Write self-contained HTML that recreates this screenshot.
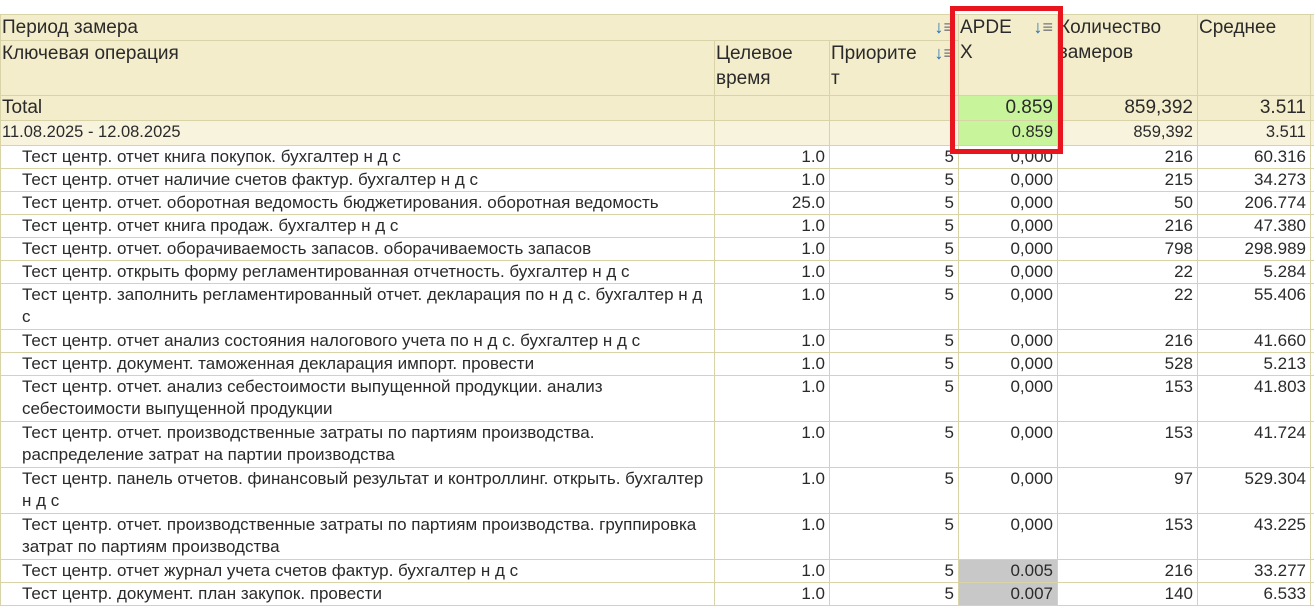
<!DOCTYPE html><html><head><meta charset="utf-8"><style>
body{margin:0;width:1314px;height:603px;overflow:hidden;background:#fff;font-family:"Liberation Sans",sans-serif;color:#2a2a2a;font-size:17px}
table{position:absolute;left:0;top:14px;border-collapse:collapse;table-layout:fixed;width:1318px}
td{border:1px solid #d9d3a8;padding:0 4px;vertical-align:top;line-height:22px;overflow:hidden;white-space:nowrap}
td.w{white-space:normal}
.h td{background:#f3edcb;font-size:19px;padding-left:1px;line-height:25px}
.t td{background:#f3edcb;font-size:19px;line-height:24px}
.t td:first-child,.d td:first-child{padding-left:1px}
.d td{background:#f8f3dd;font-size:16.5px}
.r{text-align:right}
.n td:first-child{padding-left:21px}
.g{background:#c8f59c!important}
.gr{background:#c8c8c8}
.ic{color:#1f6fb5;font-size:18px;float:right}
#box{position:absolute;left:950px;top:6px;width:103px;height:138px;border:5px solid #e8141e}
</style></head><body>
<table>
<colgroup><col style="width:714px"><col style="width:115px"><col style="width:129px"><col style="width:99px"><col style="width:140px"><col style="width:113px"><col style="width:8px"></colgroup>
<tr class="h" style="height:26px"><td colspan="3">Период замера<span class="ic">↓<span style="color:#777">≡</span></span></td><td rowspan="2" class="w">APDE <span class="ic">↓<span style="color:#777">≡</span></span><br>X</td><td rowspan="2" class="w">Количество замеров</td><td rowspan="2">Среднее</td><td rowspan="2"></td></tr>
<tr class="h" style="height:55px"><td>Ключевая операция</td><td class="w">Целевое время</td><td>Приорите <span class="ic">↓<span style="color:#777">≡</span></span><br>т</td></tr>
<tr class="t" style="height:25px"><td>Total</td><td></td><td></td><td class="r g">0.859</td><td class="r">859,392</td><td class="r">3.511</td><td></td></tr>
<tr class="d" style="height:25px"><td>11.08.2025 - 12.08.2025</td><td></td><td></td><td class="r g">0.859</td><td class="r">859,392</td><td class="r">3.511</td><td></td></tr>
<tr class="n" style="height:23px"><td>Тест центр. отчет книга покупок. бухгалтер н д с</td><td class="r">1.0</td><td class="r">5</td><td class="r">0,000</td><td class="r">216</td><td class="r">60.316</td><td></td></tr>
<tr class="n" style="height:23px"><td>Тест центр. отчет наличие счетов фактур. бухгалтер н д с</td><td class="r">1.0</td><td class="r">5</td><td class="r">0,000</td><td class="r">215</td><td class="r">34.273</td><td></td></tr>
<tr class="n" style="height:23px"><td>Тест центр. отчет. оборотная ведомость бюджетирования. оборотная ведомость</td><td class="r">25.0</td><td class="r">5</td><td class="r">0,000</td><td class="r">50</td><td class="r">206.774</td><td></td></tr>
<tr class="n" style="height:23px"><td>Тест центр. отчет книга продаж. бухгалтер н д с</td><td class="r">1.0</td><td class="r">5</td><td class="r">0,000</td><td class="r">216</td><td class="r">47.380</td><td></td></tr>
<tr class="n" style="height:23px"><td>Тест центр. отчет. оборачиваемость запасов. оборачиваемость запасов</td><td class="r">1.0</td><td class="r">5</td><td class="r">0,000</td><td class="r">798</td><td class="r">298.989</td><td></td></tr>
<tr class="n" style="height:23px"><td>Тест центр. открыть форму регламентированная отчетность. бухгалтер н д с</td><td class="r">1.0</td><td class="r">5</td><td class="r">0,000</td><td class="r">22</td><td class="r">5.284</td><td></td></tr>
<tr class="n" style="height:46px"><td>Тест центр. заполнить регламентированный отчет. декларация по н д с. бухгалтер н д<br>с</td><td class="r">1.0</td><td class="r">5</td><td class="r">0,000</td><td class="r">22</td><td class="r">55.406</td><td></td></tr>
<tr class="n" style="height:23px"><td>Тест центр. отчет анализ состояния налогового учета по н д с. бухгалтер н д с</td><td class="r">1.0</td><td class="r">5</td><td class="r">0,000</td><td class="r">216</td><td class="r">41.660</td><td></td></tr>
<tr class="n" style="height:23px"><td>Тест центр. документ. таможенная декларация импорт. провести</td><td class="r">1.0</td><td class="r">5</td><td class="r">0,000</td><td class="r">528</td><td class="r">5.213</td><td></td></tr>
<tr class="n" style="height:46px"><td>Тест центр. отчет. анализ себестоимости выпущенной продукции. анализ<br>себестоимости выпущенной продукции</td><td class="r">1.0</td><td class="r">5</td><td class="r">0,000</td><td class="r">153</td><td class="r">41.803</td><td></td></tr>
<tr class="n" style="height:46px"><td>Тест центр. отчет. производственные затраты по партиям производства.<br>распределение затрат на партии производства</td><td class="r">1.0</td><td class="r">5</td><td class="r">0,000</td><td class="r">153</td><td class="r">41.724</td><td></td></tr>
<tr class="n" style="height:46px"><td>Тест центр. панель отчетов. финансовый результат и контроллинг. открыть. бухгалтер<br>н д с</td><td class="r">1.0</td><td class="r">5</td><td class="r">0,000</td><td class="r">97</td><td class="r">529.304</td><td></td></tr>
<tr class="n" style="height:46px"><td>Тест центр. отчет. производственные затраты по партиям производства. группировка<br>затрат по партиям производства</td><td class="r">1.0</td><td class="r">5</td><td class="r">0,000</td><td class="r">153</td><td class="r">43.225</td><td></td></tr>
<tr class="n" style="height:23px"><td>Тест центр. отчет журнал учета счетов фактур. бухгалтер н д с</td><td class="r">1.0</td><td class="r">5</td><td class="r gr">0.005</td><td class="r">216</td><td class="r">33.277</td><td></td></tr>
<tr class="n" style="height:23px"><td>Тест центр. документ. план закупок. провести</td><td class="r">1.0</td><td class="r">5</td><td class="r gr">0.007</td><td class="r">140</td><td class="r">6.533</td><td></td></tr>
</table>
<div id="box"></div>
</body></html>
